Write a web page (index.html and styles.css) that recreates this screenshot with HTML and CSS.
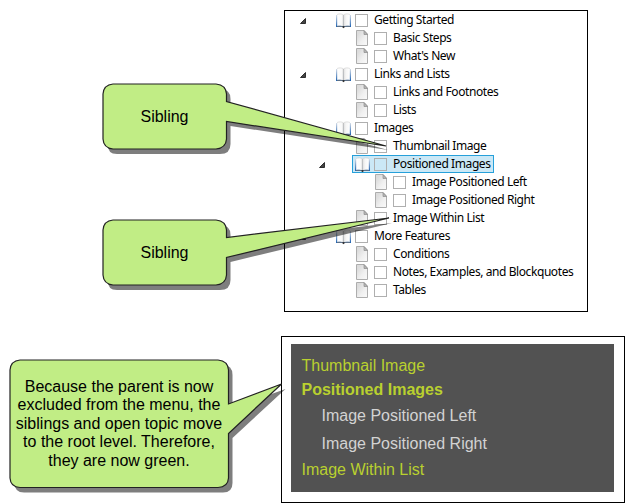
FILE: index.html
```
<!DOCTYPE html>
<html lang="en">
<head>
<meta charset="utf-8">
<title>Table of contents and menu</title>
<link rel="stylesheet" href="styles.css">
</head>
<body>
<svg class="defs" width="0" height="0" aria-hidden="true">
  <defs>
    <linearGradient id="pg" x1="0" y1="0" x2="1" y2="1"><stop offset="0.2" stop-color="#dcdcdc"/><stop offset="0.6" stop-color="#f0f0f0"/><stop offset="1" stop-color="#fafafa"/></linearGradient>
    <linearGradient id="pl"><stop offset="0" stop-color="#fff"/><stop offset="0.7" stop-color="#fafafa"/><stop offset="1" stop-color="#dcdcdc"/></linearGradient>
    <linearGradient id="pr"><stop offset="0" stop-color="#dedede"/><stop offset="0.4" stop-color="#f6f6f6"/><stop offset="1" stop-color="#fff"/></linearGradient>
    <linearGradient id="bl" x1="0" y1="0" x2="0" y2="1"><stop offset="0" stop-color="#d5dce6"/><stop offset="1" stop-color="#1d61b0"/></linearGradient>
    <symbol id="book" viewBox="0 0 15 16">
      <path d="M0 2h15v12H0z" fill="url(#bl)"/>
      <path d="M1.200 1.500C3.500.6 6 .6 7.500 2v11.500C6 12.500 3.500 12.500 1.200 13z" fill="url(#pl)"/>
      <path d="M13.800 1.500C11.500.6 9 .6 7.500 2v11.500C9 12.500 11.500 12.500 13.800 13z" fill="url(#pr)"/>
      <path d="M1 1.500C3.500.6 6 .6 7.500 2 9 .6 11.500.6 14 1.500" fill="none" stroke="#ccc" stroke-width=".6"/>
      <path d="M7.500 2v11" stroke="#b8b8b8" stroke-width=".7"/>
      <path d="M1 13.400h5.500M8.500 13.400H14" fill="none" stroke="#777" stroke-width=".8"/>
      <path d="M6.500 13h2v1.500l-1 .8-1-.8z" fill="#333"/>
    </symbol>
    <symbol id="page" viewBox="0 0 12 16">
      <path d="M.5.500h7.500l3.500 3.500v11.500H.500z" fill="url(#pg)" stroke="#adadad"/>
      <path d="M8 .5v4h3.500z" fill="#b5b5b5" stroke="#8c8c8c" stroke-width=".7"/>
    </symbol>
    <symbol id="arrow" viewBox="0 0 6 6"><path d="M5.500.5v5H.500z" fill="#444" stroke="#222" stroke-width=".9"/></symbol>
  </defs>
</svg>
<main class="figure">
  <section class="tree">
    <div class="row"><svg class="arrow"><use href="#arrow"/></svg><svg class="book"><use href="#book"/></svg><i class="check"></i><span>Getting Started</span></div>
    <div class="row leaf"><svg class="page"><use href="#page"/></svg><i class="check"></i><span>Basic Steps</span></div>
    <div class="row leaf"><svg class="page"><use href="#page"/></svg><i class="check"></i><span>What's New</span></div>
    <div class="row"><svg class="arrow"><use href="#arrow"/></svg><svg class="book"><use href="#book"/></svg><i class="check"></i><span>Links and Lists</span></div>
    <div class="row leaf"><svg class="page"><use href="#page"/></svg><i class="check"></i><span>Links and Footnotes</span></div>
    <div class="row leaf"><svg class="page"><use href="#page"/></svg><i class="check"></i><span>Lists</span></div>
    <div class="row"><svg class="arrow"><use href="#arrow"/></svg><svg class="book"><use href="#book"/></svg><i class="check"></i><span>Images</span></div>
    <div class="row leaf"><svg class="page"><use href="#page"/></svg><i class="check"></i><span>Thumbnail Image</span></div>
    <div class="row nested"><svg class="arrow"><use href="#arrow"/></svg><div class="selected"><svg class="book"><use href="#book"/></svg><i class="check"></i><span>Positioned Images</span></div></div>
    <div class="row leaf deep"><svg class="page"><use href="#page"/></svg><i class="check"></i><span>Image Positioned Left</span></div>
    <div class="row leaf deep"><svg class="page"><use href="#page"/></svg><i class="check"></i><span>Image Positioned Right</span></div>
    <div class="row leaf"><svg class="page"><use href="#page"/></svg><i class="check"></i><span>Image Within List</span></div>
    <div class="row"><svg class="arrow"><use href="#arrow"/></svg><svg class="book"><use href="#book"/></svg><i class="check"></i><span>More Features</span></div>
    <div class="row leaf"><svg class="page"><use href="#page"/></svg><i class="check"></i><span>Conditions</span></div>
    <div class="row leaf"><svg class="page"><use href="#page"/></svg><i class="check"></i><span>Notes, Examples, and Blockquotes</span></div>
    <div class="row leaf"><svg class="page"><use href="#page"/></svg><i class="check"></i><span>Tables</span></div>
  </section>
  <section class="menu-frame">
    <nav class="menu">
      <a class="item">Thumbnail Image</a>
      <a class="item current">Positioned Images</a>
      <a class="item sub">Image Positioned Left</a>
      <a class="item sub">Image Positioned Right</a>
      <a class="item last">Image Within List</a>
    </nav>
  </section>

  <svg class="bubbles" viewBox="0 0 625 503" aria-hidden="true">
    <g class="shadow">
      <path d="M117 89H220Q230.500 89 230.500 99V106L388 150 230.500 126V144Q230.500 154 220 154H117Q107.500 154 107.500 144V99Q107.500 89 117 89z"/>
      <path d="M117 225H220Q230.500 225 230.500 235V242L392 223 230.500 262V280Q230.500 290 220 290H117Q107.500 290 107.500 280V235Q107.500 225 117 225z"/>
      <path d="M24 365H223Q232.500 365 232.500 375V408L285.500 389 232.500 438V483Q232.500 492.500 223 492.500H24Q14.500 492.500 14.500 483V375Q14.500 365 24 365z"/>
    </g>
    <g class="body">
      <path d="M113 84H216Q226 85 226.500 94V101.500L386 146 226.500 121.500V139Q226 148 216 149H113Q103.500 148 103 139V94Q103.500 85 113 84z"/>
      <path d="M113 220H216Q226 221 226.500 230V237.500L389 218 226.500 257.500V275Q226 284 216 285H113Q103.500 284 103 275V230Q103.500 221 113 220z"/>
      <path d="M20 360H218Q228 361 228.500 370V404L281.500 384 228.500 433.500V478Q228 487 218 487.500H20Q10.500 487 10 478V370Q10.500 361 20 360z"/>
    </g>
  </svg>
  <p class="label first">Sibling</p>
  <p class="label second">Sibling</p>
  <p class="label note"><span>Because the parent is now</span><span>excluded from the menu, the</span><span>siblings and open topic move</span><span>to the root level. Therefore,</span><span>they are now green.</span></p>
</main>
</body>
</html>
```
FILE: styles.css
```
* { box-sizing: border-box; }
body { margin: 0; background: #fff; }
.defs { position: absolute; }
.figure {
  position: relative;
  width: 625px;
  height: 503px;
  overflow: hidden;
  padding-top: 10px;
}
.tree {
  width: 304px;
  height: 302px;
  margin-left: 284px;
  border: 1px solid #000;
  font: 12px/18px "Noto Sans", "Open Sans", sans-serif;
  letter-spacing: -0.42px;
  color: #000;
}
.row {
  display: flex;
  align-items: center;
  height: 18px;
  padding-left: 15px;
  white-space: nowrap;
}
.row svg { flex: none; }
.row.nested { padding-left: 34px; }
.row.leaf { padding-left: 71px; }
.row.deep { padding-left: 90px; }
.row .arrow { width: 6px; height: 6px; margin: 2px 30px 0 0; }
.book { width: 15px; height: 16px; margin: 1px 4px 0 0; }
.page { width: 12px; height: 16px; margin-right: 6px; }
.check {
  flex: none;
  width: 13px;
  height: 13px;
  margin: 1px 6px 0 0;
  border: 1px solid #afafaf;
}
.selected {
  display: flex;
  align-items: center;
  width: 142px;
  height: 18px;
  margin-left: -3px;
  padding-left: 2px;
  border: 1px solid #26a0da;
  background: #cbe8f6;
}
.menu-frame {
  width: 344px;
  height: 167px;
  margin: 24px 0 0 281px;
  padding: 7px 9px;
  border: 1px solid #000;
}
.menu {
  display: flex;
  flex-direction: column;
  width: 323px;
  height: 148px;
  padding: 8px 0 0 10.5px;
  background: #525252;
  font: 16px/28px "Liberation Sans", sans-serif;
}
.item { height: 28px; color: #b9d02f; white-space: nowrap; }
.current { height: 22px; line-height: 20px; font-weight: bold; }
.sub { padding-left: 20px; color: #d3d3d3; }
.last { height: 24px; line-height: 24px; }
.bubbles { position: absolute; inset: 0; width: 625px; height: 503px; }
.shadow { fill: #000; opacity: 0.5; }
.body { fill: #c1ed85; stroke: #222; stroke-width: 1.2; }
.label {
  position: absolute;
  margin: 0;
  font: 16px/18.4px "Liberation Sans", sans-serif;
  color: #000;
  text-align: center;
  white-space: nowrap;
}
.first { left: 103px; top: 108px; width: 123px; }
.second { left: 103px; top: 244px; width: 123px; }
.note { left: 10px; top: 378px; width: 218px; }
.note span { display: block; }
```
